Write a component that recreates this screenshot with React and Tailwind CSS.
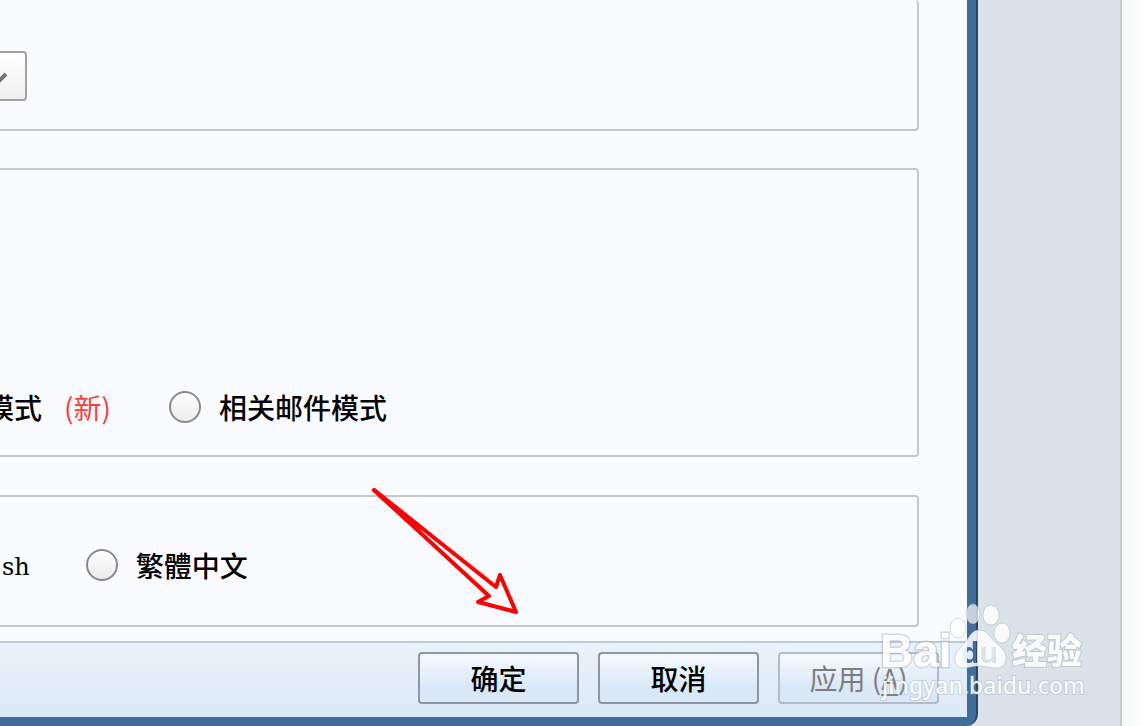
const fieldsetClass = 'min-w-0 overflow-hidden rounded-r-sm border-2 border-l-0 border-[#c8c8c8]';

const radioClass =
    'h-8 w-8 shrink-0 appearance-none rounded-full border-2 border-[#8a8a8a] bg-linear-to-b from-[#fefefe] to-[#ececec] checked:border-[#3f6c9b]';

const buttonClass =
    'h-[52px] w-[161px] rounded-sm border-2 bg-linear-to-b from-[#f3f8ff] from-10% to-[#d8e8f7] to-70% text-[28px] leading-none';

function RadioOption({ id, name, label }) {
    return (
        <div className="flex items-center gap-[18px]">
            <input type="radio" id={id} name={name} className={radioClass} />
            <label htmlFor={id} className="whitespace-nowrap">{label}</label>
        </div>
    );
}

function PointerArrow() {
    return (
        <svg
            className="pointer-events-none absolute top-[480px] left-[364px]"
            width="164"
            height="144"
            fill="none"
            stroke="#ff0000"
            strokeWidth="4"
            strokeLinejoin="round"
            aria-hidden="true"
        >
            <path d="M10 10 L132 107 L136 95 L152 132 L114 122 L125 116 Z" />
            <path d="M10 10 L56 47 L54 50 Z" fill="#ff0000" />
        </svg>
    );
}

function Watermark() {
    return (
        <div className="pointer-events-none absolute right-[60px] bottom-[20px]">
            <svg width="208" height="104" viewBox="0 0 208 104" aria-hidden="true">
                <defs>
                    <mask id="paw">
                        <rect width="208" height="104" fill="#fff" />
                        <text x="81" y="61" fontSize="29" fontWeight="700" fontFamily="Open Sans, sans-serif" fill="#000">du</text>
                    </mask>
                </defs>
                <g fill="#fff" stroke="#98a3ae" strokeOpacity="0.45" opacity="0.85">
                    <text x="0" y="65" fontSize="46" fontWeight="700" fontFamily="Liberation Sans, sans-serif" strokeWidth="3" paintOrder="stroke">Bai</text>
                    <ellipse cx="78" cy="26" rx="8" ry="10" />
                    <ellipse cx="93" cy="12" rx="7" ry="10" fillOpacity="0.8" />
                    <ellipse cx="111" cy="13" rx="8" ry="10" />
                    <ellipse cx="122" cy="31" rx="8" ry="10" />
                    <path
                        mask="url(#paw)"
                        d="M99 28 C107 28 110 35 115 40 C120 45 126 49 126 56 C126 63 121 67 115 66 C107 65 104 64 99 64 C94 64 89 66 83 66 C77 66 74 61 75 55 C76 48 82 45 86 39 C90 34 92 28 99 28 Z"
                    />
                    <text x="132" y="62" fontSize="35" fontWeight="900" fontFamily="Noto Sans CJK SC, sans-serif" strokeWidth="2" paintOrder="stroke">经验</text>
                </g>
                <text x="2" y="92" fontSize="23" fontWeight="500" fontFamily="Noto Sans, sans-serif" fill="#fff" fillOpacity="0.9" stroke="#98a3ae" strokeOpacity="0.35" strokeWidth="2" paintOrder="stroke">
                    jingyan.baidu.com
                </text>
            </svg>
        </div>
    );
}

export default function App() {
    return (
        <div className="relative flex min-h-screen overflow-hidden bg-[#dbe2e9] font-['Noto_Sans_CJK_SC',sans-serif] text-[28px] leading-10 font-medium text-black">
            <div className="flex min-w-0 flex-1 rounded-br-xl border-r-2 border-[#2b4663] bg-[#416d9b]">
                <main className="mr-[9px] mb-[9px] flex min-w-0 flex-1 flex-col bg-[#f9fbff]">
                    <div className={`${fieldsetClass} mr-12 border-t-0 pt-[51px] pb-7`}>
                        <div className="relative h-[50px] w-[27px]">
                            <select
                                aria-label="选项"
                                className="h-full w-full appearance-none rounded-r-sm border-2 border-l-0 border-[#a2a2a2] bg-linear-to-b from-white to-[#f0f0f0]"
                            />
                            <svg
                                className="pointer-events-none absolute top-5 left-0"
                                width="10"
                                height="14"
                                fill="none"
                                stroke="#757575"
                                strokeWidth="4"
                                aria-hidden="true"
                            >
                                <path d="M-7 4 L-1 10 L6 3" />
                            </svg>
                        </div>
                    </div>

                    <fieldset className={`${fieldsetClass} mt-[37px] mr-12 pt-[217px] pb-7`}>
                        <div className="flex items-center">
                            <span className="-ml-3.5 whitespace-nowrap">模式</span>
                            <span className="ml-[22px] whitespace-nowrap font-normal text-[#ff3b3b]">(新)</span>
                            <div className="ml-[58px]">
                                <RadioOption id="related" name="mode" label="相关邮件模式" />
                            </div>
                        </div>
                    </fieldset>

                    <fieldset className={`${fieldsetClass} mt-[38px] mr-12 pt-[46px] pb-[38px]`}>
                        <div className="flex items-center gap-14">
                            <span className="pt-1 pl-0.5 font-['DejaVu_Serif',serif] text-[24px]">sh</span>
                            <RadioOption id="traditional" name="language" label="繁體中文" />
                        </div>
                    </fieldset>

                    <footer className="mt-3.5 flex justify-end gap-[19px] border-t-2 border-[#bdc9d4] bg-linear-to-b from-[#e8f2fa] to-[#dce9f6] pt-[9px] pr-7 pb-[13px]">
                        <button type="button" className={`${buttonClass} border-[#8c97a3]`}>确定</button>
                        <button type="button" className={`${buttonClass} border-[#8c97a3]`}>取消</button>
                        <button type="button" disabled className={`${buttonClass} border-[#afbdca] font-normal text-[#7d7d7d]`}>
                            应用 (<u className="underline-offset-4">A</u>)
                        </button>
                    </footer>
                </main>
            </div>

            <div className="w-[142px] shrink-0" />
            <div className="w-7 shrink-0 border-l-2 border-[#c8caca] bg-linear-to-r from-[#f7f9f9] to-white" />

            <PointerArrow />
            <Watermark />
        </div>
    );
}
